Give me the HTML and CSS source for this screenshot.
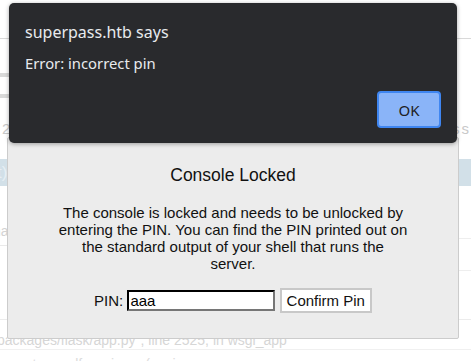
FILE: index.html
```html
<!DOCTYPE html>
<html>
<head>
<meta charset="utf-8">
<link rel="stylesheet" href="styles.css">
</head>
<body>
<div class="page">
  <div class="hd"></div>
  <div class="bars"><div class="bar"></div><div class="bar"></div></div>
  <div class="row t1"><span>2</span><span>ss</span></div>
  <div class="band"><span>t)</span></div>
  <div class="split">
    <div class="lcol"><div class="na">na</div></div>
    <div class="rcol"><div class="rl1"></div><div class="rl2"></div></div>
  </div>
  <div class="frame">
    <div class="src">packages/flask/app.py", line 2525, in wsgi_app</div>
    <div class="src2">  return self.wsgi_app(environ</div>
  </div>
</div>

<div class="pin">
  <h3 class="pin-title">Console Locked</h3>
  <p class="pin-text">The console is locked and needs to be unlocked by entering the PIN. You can find the PIN printed out on the standard output of your shell that runs the server.</p>
  <form class="pin-form">
    <p class="pin-row">PIN: <input class="pin-input" type="text" value="aaa"> <button class="pin-btn" type="button">Confirm Pin</button></p>
  </form>
</div>

<div class="alert">
  <div class="alert-title">superpass.htb says</div>
  <div class="alert-msg">Error: incorrect pin</div>
  <div class="alert-actions"><button class="ok" type="button">OK</button></div>
</div>
</body>
</html>
```
FILE: styles.css
```css
html, body {
  margin: 0;
  padding: 0;
}
body {
  width: 471px;
  height: 361px;
  overflow: hidden;
  position: relative;
  background: #fff;
  font-family: "Liberation Sans", Arial, sans-serif;
}

/* faded background page */
.page {
  color: #d0d0d0;
}
.hd {
  height: 38px;
  border-bottom: 1px solid #d9d9d9;
}
.bars {
  margin-top: 34px;
  display: flex;
  flex-direction: column;
  gap: 17px;
}
.bar {
  width: 200px;
  height: 4px;
  background: #d9d9d9;
}
.row {
  display: flex;
  justify-content: space-between;
}
.t1 {
  margin-top: 21px;
  height: 20px;
  font-size: 15px;
  letter-spacing: 2px;
  line-height: 20px;
  color: #c9c9c9;
  padding-left: 2px;
}
.band {
  margin-top: 20px;
  height: 27px;
  background: #d2e0e8;
  color: #e7eff4;
  font-size: 17px;
  line-height: 27px;
  text-indent: -3px;
}
.split {
  display: flex;
  justify-content: space-between;
  height: 133px;
}
.lcol {
  width: 100px;
}
.na {
  margin-top: 37px;
  font-size: 14px;
  color: #d3d3d3;
  text-indent: -7px;
  padding-bottom: 6px;
  border-bottom: 1px solid #eaeaea;
}
.rcol {
  width: 100px;
}
.rl1 {
  height: 52px;
  border-bottom: 1px solid #eeeeee;
}
.rl2 {
  height: 31px;
  border-bottom: 1px solid #eeeeee;
}
.frame {
  border-top: 1px solid #ececec;
}
.src {
  padding-top: 12px;
  height: 17px;
  font-size: 14px;
  color: #d6d6d6;
  text-indent: -3px;
  border-bottom: 1px solid #f0f0f0;
}
.src2 {
  padding-top: 6px;
  padding-left: 20px;
  font-size: 14px;
  color: #dcdcdc;
}

/* PIN prompt */
.pin {
  position: absolute;
  left: 7px;
  top: 137px;
  width: 350px;
  padding: 10px 50px;
  background: #ececec;
  border: 1px solid #cccccc;
  border-radius: 2px;
  color: #111;
  text-align: center;
}
.pin-title {
  margin: 17px 0 19px 0;
  font-size: 17.5px;
  font-weight: normal;
  line-height: 20px;
}
.pin-text {
  margin: 0 0 16px 0;
  font-size: 15px;
  line-height: 17px;
}
.pin-form {
  margin: 0;
}
.pin-row {
  margin: 0 0 15px 0;
  font-size: 15px;
  line-height: 17px;
}
.pin-input {
  width: 142px;
  height: 17px;
  padding: 0 1px;
  margin: 0;
  border: 2px inset #767676;
  border-top-color: #1d1d1d;
  border-left-color: #1d1d1d;
  background: #fff;
  font-family: "Liberation Sans", Arial, sans-serif;
  font-size: 15px;
  color: #000;
  vertical-align: baseline;
}
.pin-btn {
  height: 25px;
  padding: 1px 5px;
  margin: 0;
  border: 2px solid #c8c8c8;
  background: #fff;
  font-family: "Liberation Sans", Arial, sans-serif;
  font-size: 15px;
  color: #111;
  vertical-align: baseline;
}

/* Browser alert */
.alert {
  position: absolute;
  left: 9px;
  top: 3px;
  width: 448px;
  height: 140px;
  box-sizing: border-box;
  padding: 18px 16px 15px 16px;
  background: #292a2d;
  border-radius: 5px;
  box-shadow: 0 1px 4px rgba(0, 0, 0, 0.35);
  display: flex;
  flex-direction: column;
  font-family: "Noto Sans", "Open Sans", sans-serif;
  color: #e8eaed;
}
.alert-title {
  font-size: 16px;
  line-height: 22px;
}
.alert-msg {
  margin-top: 10px;
  font-size: 14.8px;
  line-height: 20px;
}
.alert-actions {
  margin-top: auto;
  display: flex;
  justify-content: flex-end;
}
.ok {
  width: 64px;
  height: 37px;
  box-sizing: border-box;
  border: 2px solid #3f86f1;
  border-radius: 4px;
  background: #8ab4f8;
  color: #202124;
  font-family: "Noto Sans", "Open Sans", sans-serif;
  font-size: 15px;
  padding: 0;
}
```
